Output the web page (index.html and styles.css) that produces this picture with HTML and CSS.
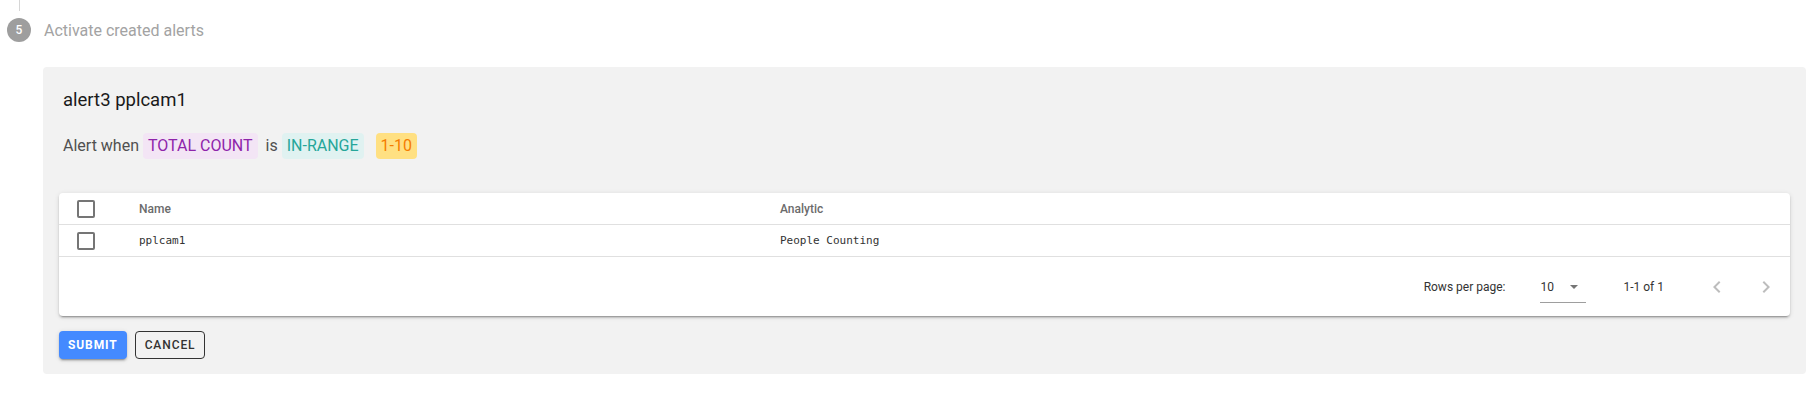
FILE: index.html
```html
<!DOCTYPE html>
<html lang="en">
<head>
    <title>Activate created alerts</title>
    <meta charset="UTF-8">
    <link rel="stylesheet" href="styles.css">
</head>
<body>
    <div class="stepper">
        <div class="step-line"></div>
        <div class="step-header">
            <span class="step-num">5</span>
            <span class="step-label">Activate created alerts</span>
        </div>

        <div class="step-content">
            <h3 class="alert-title">alert3 pplcam1</h3>
            <p class="alert-rule">Alert when<span class="chip chip-purple">TOTAL COUNT</span> is<span class="chip chip-teal">IN-RANGE</span> <span class="chip chip-amber">1-10</span></p>

            <div class="table-card">
                <div class="table-row table-head">
                    <div class="cell cell-check"><span class="checkbox"></span></div>
                    <div class="cell">Name</div>
                    <div class="cell">Analytic</div>
                </div>
                <div class="table-row table-body">
                    <div class="cell cell-check"><span class="checkbox"></span></div>
                    <div class="cell mono">pplcam1</div>
                    <div class="cell mono">People Counting</div>
                </div>
                <div class="table-footer">
                    <span class="rows-label">Rows per page:</span>
                    <div class="rows-select">
                        <span>10</span>
                        <span class="caret"></span>
                    </div>
                    <span class="page-info">1-1 of 1</span>
                    <button class="page-btn" disabled>
                        <svg viewBox="0 0 24 24" width="24" height="24"><path d="M15.41,16.58L10.83,12L15.41,7.41L14,6L8,12L14,18L15.41,16.58Z"/></svg>
                    </button>
                    <button class="page-btn next" disabled>
                        <svg viewBox="0 0 24 24" width="24" height="24"><path d="M8.59,16.58L13.17,12L8.59,7.41L10,6L16,12L10,18L8.59,16.58Z"/></svg>
                    </button>
                </div>
            </div>

            <div class="actions">
                <button class="btn btn-primary">Submit</button>
                <button class="btn btn-outline">Cancel</button>
            </div>
        </div>
    </div>
</body>
</html>
```

FILE: styles.css
```css
* {
    margin: 0;
    padding: 0;
    box-sizing: border-box;
}

body {
    font-family: Roboto, "Liberation Sans", sans-serif;
    background-color: #fff;
    color: #212121;
}

.step-line {
    width: 1px;
    height: 11px;
    margin-left: 19px;
    background-color: #d6d6d6;
}

.step-header {
    display: flex;
    align-items: center;
    margin-top: 7px;
    padding-left: 7px;
}

.step-num {
    width: 24px;
    height: 24px;
    border-radius: 50%;
    background-color: #9e9e9e;
    color: #fff;
    font-size: 12px;
    font-weight: 500;
    display: flex;
    align-items: center;
    justify-content: center;
}

.step-label {
    margin-left: 13px;
    font-size: 16px;
    color: #a3a3a3;
}

.step-content {
    margin: 25px 10px 0 43px;
    background-color: #f2f2f2;
    border-radius: 4px;
    padding: 19px 16px 15px 16px;
}

.alert-title {
    font-size: 18.5px;
    font-weight: 400;
    line-height: 28px;
    margin-left: 4px;
    color: #1a1a1a;
}

.alert-rule {
    margin: 19px 0 0 4px;
    font-size: 16px;
    line-height: 26px;
    color: #505050;
}

.chip {
    display: inline-block;
    margin: 0 4px;
    padding: 0 5px;
    border-radius: 4px;
    line-height: 26px;
}

.chip-purple {
    background-color: #f3e5f5;
    color: #8e24aa;
}

.chip-teal {
    background-color: #e0f2f1;
    color: #26a69a;
}

.chip-amber {
    background-color: #ffe082;
    color: #f57c00;
}

.table-card {
    margin-top: 34px;
    background-color: #fff;
    border-radius: 4px;
    box-shadow: 0 3px 1px -2px rgba(0, 0, 0, 0.2), 0 2px 2px 0 rgba(0, 0, 0, 0.14), 0 1px 5px 0 rgba(0, 0, 0, 0.12);
}

.table-row {
    display: grid;
    grid-template-columns: 80px 641px 1fr;
    height: 32px;
    border-bottom: 1px solid #e0e0e0;
}

.cell {
    display: flex;
    align-items: center;
}

.cell-check {
    padding-left: 18px;
}

.checkbox {
    width: 18px;
    height: 18px;
    border: 2px solid #757575;
    border-radius: 2px;
}

.table-head .cell {
    font-size: 12px;
    font-weight: 500;
    color: #6b6b6b;
}

.mono {
    font-family: "DejaVu Sans Mono", "Liberation Mono", monospace;
    font-size: 11px;
    color: #333;
}

.table-footer {
    display: flex;
    align-items: center;
    justify-content: flex-end;
    height: 59px;
    padding-right: 12px;
    font-size: 12px;
    color: #333;
}

.rows-select {
    width: 46px;
    height: 24px;
    margin-left: 35px;
    display: flex;
    align-items: center;
    border-bottom: 1px solid #9e9e9e;
    margin-top: 8px;
    padding-bottom: 6px;
}

.caret {
    margin-left: 16px;
    border-left: 4px solid transparent;
    border-right: 4px solid transparent;
    border-top: 4px solid #757575;
}

.page-info {
    margin-left: 37px;
    margin-right: 41px;
}

.page-btn {
    border: none;
    background: none;
    width: 24px;
    height: 24px;
    display: flex;
    fill: #bdbdbd;
}

.page-btn.next {
    margin-left: 25px;
}

.actions {
    display: flex;
    gap: 8px;
    margin-top: 15px;
}

.btn {
    height: 28px;
    padding: 0 9px;
    border-radius: 4px;
    font-family: Roboto, "Liberation Sans", sans-serif;
    font-size: 12px;
    letter-spacing: 0.9px;
    text-transform: uppercase;
    cursor: pointer;
}

.btn-primary {
    border: none;
    background-color: #448aff;
    color: #fff;
    font-weight: 700;
    box-shadow: 0 3px 1px -2px rgba(0, 0, 0, 0.2), 0 2px 2px 0 rgba(0, 0, 0, 0.14), 0 1px 5px 0 rgba(0, 0, 0, 0.12);
}

.btn-outline {
    border: 1px solid #333;
    background-color: transparent;
    color: #333;
    font-weight: 500;
}
```
